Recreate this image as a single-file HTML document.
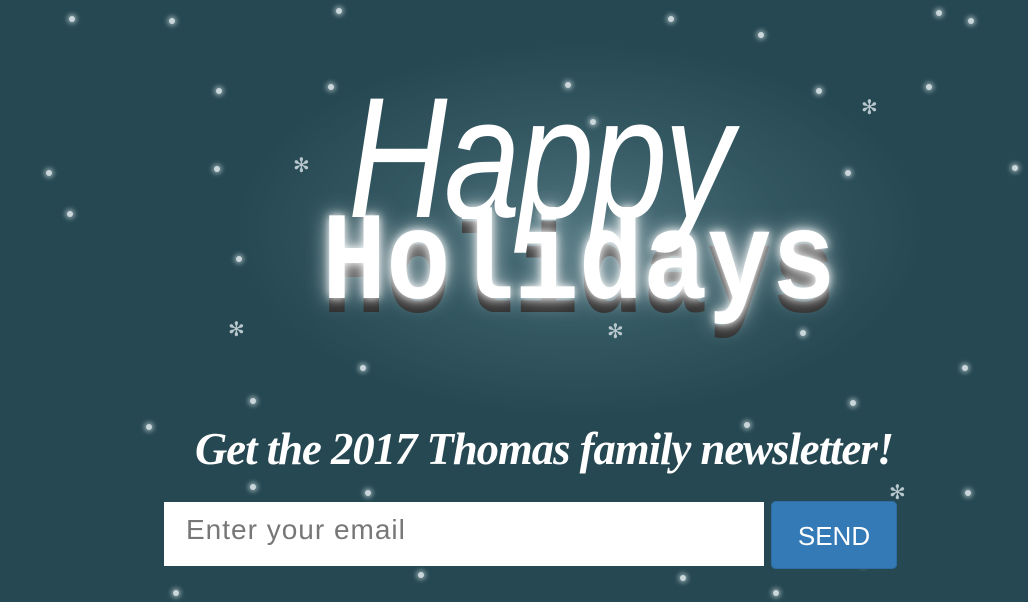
<!DOCTYPE html>
<html><head><meta charset="utf-8"><style>
html,body{margin:0;padding:0;width:1028px;height:602px;overflow:hidden}
body{background:#264852;position:relative;font-family:"Liberation Sans",sans-serif}
.glow{position:absolute;left:230px;top:40px;width:700px;height:380px;border-radius:50%;background:radial-gradient(ellipse at center,rgba(110,150,160,.55) 0%,rgba(80,120,130,.3) 40%,rgba(38,72,82,0) 70%)}
.s{position:absolute;width:6px;height:6px;border-radius:50%;background:#c9d6da;box-shadow:0 0 5px 2px rgba(200,215,220,.6)}
.f{position:absolute;color:#b7c7cc;font-size:20px;line-height:1}
.hol{position:absolute;left:322px;top:203px;font-family:"Liberation Mono",monospace;font-weight:bold;font-size:107px;color:#fff;letter-spacing:0;transform:scaleY(1.17);transform-origin:0 0;line-height:1;text-shadow:0 0 8px #fff,0 0 20px rgba(255,255,255,.8),0 12px 0 #2a2a2a}
.hap{position:absolute;left:348px;top:72px;font-family:"Liberation Sans",sans-serif;font-style:italic;font-size:172px;color:#fff;line-height:1;transform:scaleX(.8);transform-origin:0 0;letter-spacing:-4px}
.tag{position:absolute;left:195px;top:422px;font-family:"Liberation Serif",serif;font-style:italic;font-weight:bold;font-size:46px;color:#fff;white-space:nowrap;transform:scaleX(.97);transform-origin:0 0;letter-spacing:-1px}
.inp{position:absolute;left:164px;top:502px;width:600px;height:64px;background:#fff;color:#777;font-size:28px;line-height:56px;box-sizing:border-box;padding-left:22px;letter-spacing:1px}
.btn{position:absolute;left:771px;top:501px;width:126px;height:68px;background:#337ab7;border-radius:5px;color:#fff;font-size:26px;text-align:center;line-height:70px;box-shadow:inset 0 0 0 1px #2e6da4}
</style></head><body>
<div class="glow"></div>
<div class="s" style="left:69px;top:16px"></div><div class="s" style="left:169px;top:18px"></div>
<div class="s" style="left:216px;top:88px"></div><div class="s" style="left:46px;top:170px"></div>
<div class="s" style="left:214px;top:166px"></div><div class="s" style="left:67px;top:211px"></div>
<div class="s" style="left:336px;top:8px"></div><div class="s" style="left:328px;top:84px"></div>
<div class="s" style="left:565px;top:82px"></div><div class="s" style="left:590px;top:119px"></div>
<div class="s" style="left:668px;top:16px"></div><div class="s" style="left:758px;top:32px"></div>
<div class="s" style="left:816px;top:88px"></div><div class="s" style="left:845px;top:170px"></div>
<div class="s" style="left:926px;top:84px"></div><div class="s" style="left:936px;top:10px"></div>
<div class="s" style="left:968px;top:18px"></div><div class="s" style="left:1012px;top:165px"></div>
<div class="s" style="left:236px;top:256px"></div><div class="s" style="left:360px;top:365px"></div>
<div class="s" style="left:250px;top:398px"></div><div class="s" style="left:146px;top:424px"></div>
<div class="s" style="left:744px;top:422px"></div><div class="s" style="left:850px;top:400px"></div>
<div class="s" style="left:962px;top:365px"></div><div class="s" style="left:965px;top:490px"></div>
<div class="s" style="left:250px;top:484px"></div><div class="s" style="left:365px;top:490px"></div>
<div class="s" style="left:418px;top:572px"></div><div class="s" style="left:680px;top:575px"></div>
<div class="s" style="left:173px;top:590px"></div><div class="s" style="left:773px;top:590px"></div>
<div class="s" style="left:860px;top:560px"></div><div class="s" style="left:800px;top:330px"></div>
<div class="f" style="left:293px;top:156px">✻</div><div class="f" style="left:861px;top:98px">✻</div>
<div class="f" style="left:228px;top:320px">✻</div><div class="f" style="left:607px;top:322px">✻</div>
<div class="f" style="left:889px;top:483px">✻</div>
<div class="hol">Holidays</div>
<div class="hap">Happy</div>
<div class="tag">Get the 2017 Thomas family newsletter!</div>
<div class="inp">Enter your email</div>
<div class="btn">SEND</div>
</body></html>
